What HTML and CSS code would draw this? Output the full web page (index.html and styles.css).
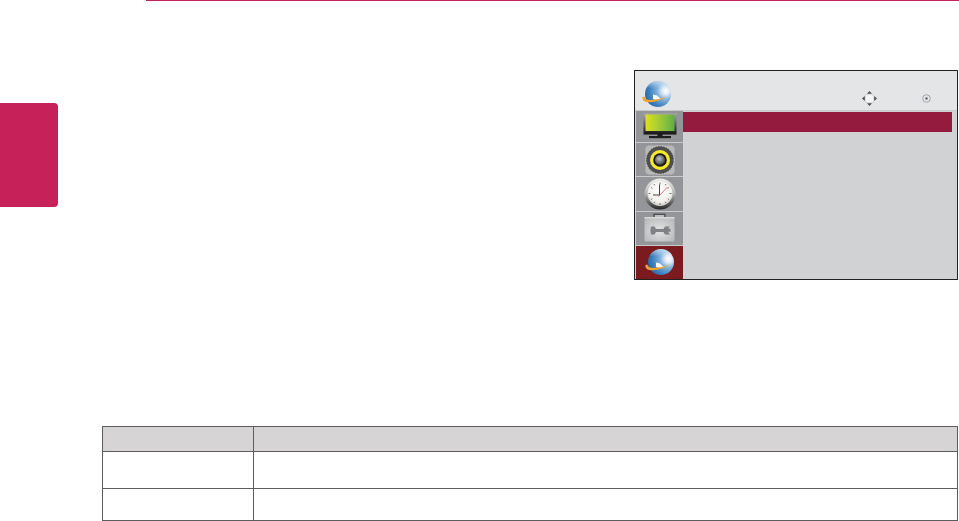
FILE: index.html
```html
<!DOCTYPE html>
<html lang="en">
<head>
  <meta charset="UTF-8">
  <meta name="viewport" content="width=device-width, initial-scale=1.0">
  <title>Manual page</title>
  <link rel="stylesheet" href="styles.css">
</head>
<body>
  <svg class="defs" width="0" height="0" aria-hidden="true">
    <defs>
      <radialGradient id="globeFill" cx="0.8" cy="0.38" r="0.9">
        <stop offset="0" stop-color="#ffffff"/>
        <stop offset="0.16" stop-color="#dfeaf5"/>
        <stop offset="0.38" stop-color="#7fb0da"/>
        <stop offset="0.7" stop-color="#3d80bf"/>
        <stop offset="1" stop-color="#1f5f9f"/>
      </radialGradient>
      <linearGradient id="globeSheen" x1="0" y1="0" x2="0" y2="1">
        <stop offset="0" stop-color="#ffffff" stop-opacity="0.6"/>
        <stop offset="0.28" stop-color="#ffffff" stop-opacity="0"/>
      </linearGradient>
      <linearGradient id="screenFill" x1="0" y1="0" x2="1" y2="0">
        <stop offset="0" stop-color="#dfe01e"/>
        <stop offset="0.55" stop-color="#98c83a"/>
        <stop offset="1" stop-color="#5fae47"/>
      </linearGradient>
      <linearGradient id="bezelFill" x1="0" y1="0" x2="0" y2="1">
        <stop offset="0" stop-color="#a9aaac"/>
        <stop offset="0.55" stop-color="#5a5a5c"/>
        <stop offset="1" stop-color="#121212"/>
      </linearGradient>
      <radialGradient id="coneFill" cx="0.42" cy="0.38" r="0.65">
        <stop offset="0" stop-color="#c2c3c5"/>
        <stop offset="1" stop-color="#3a3a3c"/>
      </radialGradient>
      <linearGradient id="clockRim" x1="0" y1="0" x2="0" y2="1">
        <stop offset="0" stop-color="#f0f0f0"/>
        <stop offset="0.5" stop-color="#b0b0b0"/>
        <stop offset="1" stop-color="#262626"/>
      </linearGradient>
      <radialGradient id="clockFace" cx="0.5" cy="0.4" r="0.65">
        <stop offset="0" stop-color="#ffffff"/>
        <stop offset="0.7" stop-color="#f2f0ea"/>
        <stop offset="1" stop-color="#b9b9b6"/>
      </radialGradient>
      <radialGradient id="caseFill" cx="0.5" cy="0.55" r="0.7">
        <stop offset="0" stop-color="#e2e3e3"/>
        <stop offset="1" stop-color="#b4b5b6"/>
      </radialGradient>
      <symbol id="globe" viewBox="0 0 30 28">
        <circle cx="16" cy="14" r="13" fill="url(#globeFill)"/>
        <circle cx="16" cy="14" r="13" fill="url(#globeSheen)"/>
        <path d="M11 14.5 L15 15.5 L19 19.5 L15 20.5 L11 19 Z" fill="#ffffff"/>
        <path d="M0.5 17 Q-0.5 22.5 8 22.3 Q17 21.8 24.5 16.5 Q17 19.8 8.5 20 Q3 20 2.4 16.5 Z" fill="#eda52e"/>
      </symbol>
    </defs>
  </svg>

  <div class="top-rule"></div>

  <div class="upper">
    <div class="side-tab"></div>

    <div class="osd">
      <div class="osd-head">
        <svg class="globe-icon" width="30" height="28"><use href="#globe"/></svg>
        <div class="osd-controls">
          <svg class="nav-icon" width="15" height="15" viewBox="0 0 15 15">
            <rect x="3.2" y="3.2" width="8.6" height="8.6" rx="2.5" fill="#f6f6f7" stroke="#b5b6b8" stroke-width="0.5"/>
            <path d="M7.5 0 L10 2.8 H5 Z M7.5 15 L10 12.2 H5 Z M0 7.5 L2.8 5 V10 Z M15 7.5 L12.2 5 V10 Z" fill="#505155"/>
          </svg>
          <svg class="ok-icon" width="9" height="9" viewBox="0 0 9 9">
            <circle cx="4.5" cy="4.5" r="3.8" fill="none" stroke="#8b8c8f" stroke-width="0.7"/>
            <circle cx="4.5" cy="4.5" r="1.3" fill="#6a6b6e"/>
          </svg>
        </div>
      </div>
      <div class="osd-body">
        <div class="osd-side">
          <div class="side-item item-a">
            <svg width="34" height="26" viewBox="0 0 34 26">
              <rect x="0.5" y="0.5" width="33" height="21" fill="url(#bezelFill)"/>
              <rect x="2.5" y="1.5" width="29" height="16.5" fill="url(#screenFill)"/>
              <rect x="14.5" y="21" width="5" height="3" fill="#1c1c1c"/>
              <rect x="6" y="23" width="22" height="2.2" fill="#1f1f1f"/>
            </svg>
          </div>
          <div class="side-item item-b">
            <svg width="30" height="30" viewBox="0 0 30 30">
              <rect x="0.5" y="0.5" width="29" height="29" rx="4" fill="#b9b9b9"/>
              <circle cx="15" cy="15" r="14" fill="#4e4e50" stroke="#dadada" stroke-width="0.8" stroke-dasharray="1.5 1.2"/>
              <circle cx="15" cy="15" r="10" fill="#f6ea2c"/>
              <circle cx="15" cy="15" r="6.8" fill="#171717"/>
              <circle cx="15" cy="15" r="5" fill="url(#coneFill)"/>
            </svg>
          </div>
          <div class="side-item item-c">
            <svg width="32" height="32" viewBox="0 0 32 32">
              <circle cx="16" cy="16" r="15.5" fill="url(#clockRim)"/>
              <circle cx="16" cy="15.5" r="12.5" fill="url(#clockFace)"/>
              <path d="M16 4.5 V6.5 M16 25 V27 M4.5 15.5 H6.5 M25.5 15.5 H27.5 M10 6 L10.8 7.3 M22 6 L21.2 7.3 M7 9.5 L8.3 10.3 M25 9.5 L23.7 10.3 M7 21.5 L8.3 20.7 M25 21.5 L23.7 20.7 M10 25 L10.8 23.7 M22 25 L21.2 23.7" stroke="#55565a" stroke-width="0.8"/>
              <path d="M15.5 6.5 V17 H9" fill="none" stroke="#333335" stroke-width="0.9"/>
              <path d="M14.5 18.5 L23.5 9" stroke="#e23a4a" stroke-width="0.7"/>
            </svg>
          </div>
          <div class="side-item item-d">
            <svg width="31" height="29" viewBox="0 0 31 29">
              <rect x="9" y="0.5" width="13" height="4.5" fill="#bdbebf"/>
              <path d="M10 5 V1.2 H21 V5" fill="none" stroke="#4f5052" stroke-width="1.6"/>
              <rect x="0.5" y="4" width="30" height="24.5" rx="1" fill="url(#caseFill)"/>
              <rect x="0.5" y="4" width="30" height="1.5" fill="#d8d9d9"/>
              <path d="M7 13.5 H10.5 L12 16 H19.5 L21 13.5 H26 L24 15.8 H26.5 V18.8 H24 L26 21.5 H21 L19.5 19 H12 L10.5 21.5 H7 Q5.8 17.5 7 13.5 Z" fill="#808184"/>
            </svg>
          </div>
          <div class="side-item item-e is-active">
            <svg width="30" height="28"><use href="#globe"/></svg>
          </div>
        </div>
        <ul class="osd-list">
          <li class="osd-row is-current"></li>
        </ul>
      </div>
    </div>
  </div>

  <table class="info-table">
    <thead>
      <tr class="row-head"><th class="col-name"></th><th></th></tr>
    </thead>
    <tbody>
      <tr class="row-tall"><td></td><td></td></tr>
      <tr class="row-short"><td></td><td></td></tr>
    </tbody>
  </table>
</body>
</html>
```

FILE: styles.css
```css
body {
  margin: 0;
  background: #ffffff;
  font-family: "Liberation Sans", Arial, sans-serif;
}

.defs {
  display: block;
  height: 0;
}

.top-rule {
  height: 1px;
  margin-left: 146px;
  background: #c7215a;
}

.upper {
  display: flex;
  justify-content: space-between;
  align-items: flex-start;
  margin-top: 69px;
  padding-right: 1px;
}

.side-tab {
  width: 58px;
  height: 104px;
  margin-top: 33px;
  background: #c7215a;
  border-radius: 0 4px 4px 0;
}

/* monitor menu */
.osd {
  width: 324px;
  height: 210px;
  box-sizing: border-box;
  border: 1px solid #222222;
  padding-left: 1px;
  background: #d1d2d4;
  display: flex;
  flex-direction: column;
}

.osd-head {
  height: 40px;
  flex: none;
  display: flex;
  align-items: center;
  justify-content: space-between;
  margin-left: -1px;
  padding: 7px 26px 0 7px;
  box-sizing: border-box;
  background: #e4e5e7;
  border-bottom: 1px solid #c8c9c9;
}

.globe-icon {
  display: block;
}

.osd-controls {
  display: flex;
  align-items: center;
  gap: 45px;
  margin-top: 8px;
}

.nav-icon,
.ok-icon {
  display: block;
}

.osd-body {
  flex: 1;
  display: flex;
}

.osd-side {
  width: 47px;
  flex: none;
  display: flex;
  flex-direction: column;
}

.side-item {
  display: flex;
  align-items: center;
  justify-content: center;
  background: #949599;
  border-bottom: 1px solid #c9cacb;
  box-sizing: border-box;
}

.side-item svg {
  display: block;
}

.item-a {
  height: 32px;
  padding-bottom: 1px;
}

.item-b { height: 34px; }
.item-c { height: 35px; }

.item-d {
  height: 34px;
  padding-bottom: 2px;
}

.item-e {
  flex: 1;
  border-bottom: 0;
  padding-bottom: 1px;
}

.is-active {
  background: #7b1b20;
}

.osd-list {
  list-style: none;
  flex: 1;
  margin: 0;
  padding: 1px 5px 0 0;
}

.osd-row {
  height: 20px;
}

.is-current {
  background: #951b3e;
}

/* table */
.info-table {
  width: 856px;
  margin: 146px 0 0 102px;
  border-collapse: collapse;
  table-layout: fixed;
}

.info-table th,
.info-table td {
  padding: 0;
  border: 1px solid #5c5c5c;
}

.col-name {
  width: 150px;
}

.row-head {
  height: 25px;
  background: #d6d4d5;
}

.row-tall {
  height: 37px;
}

.row-short {
  height: 32px;
}
```
